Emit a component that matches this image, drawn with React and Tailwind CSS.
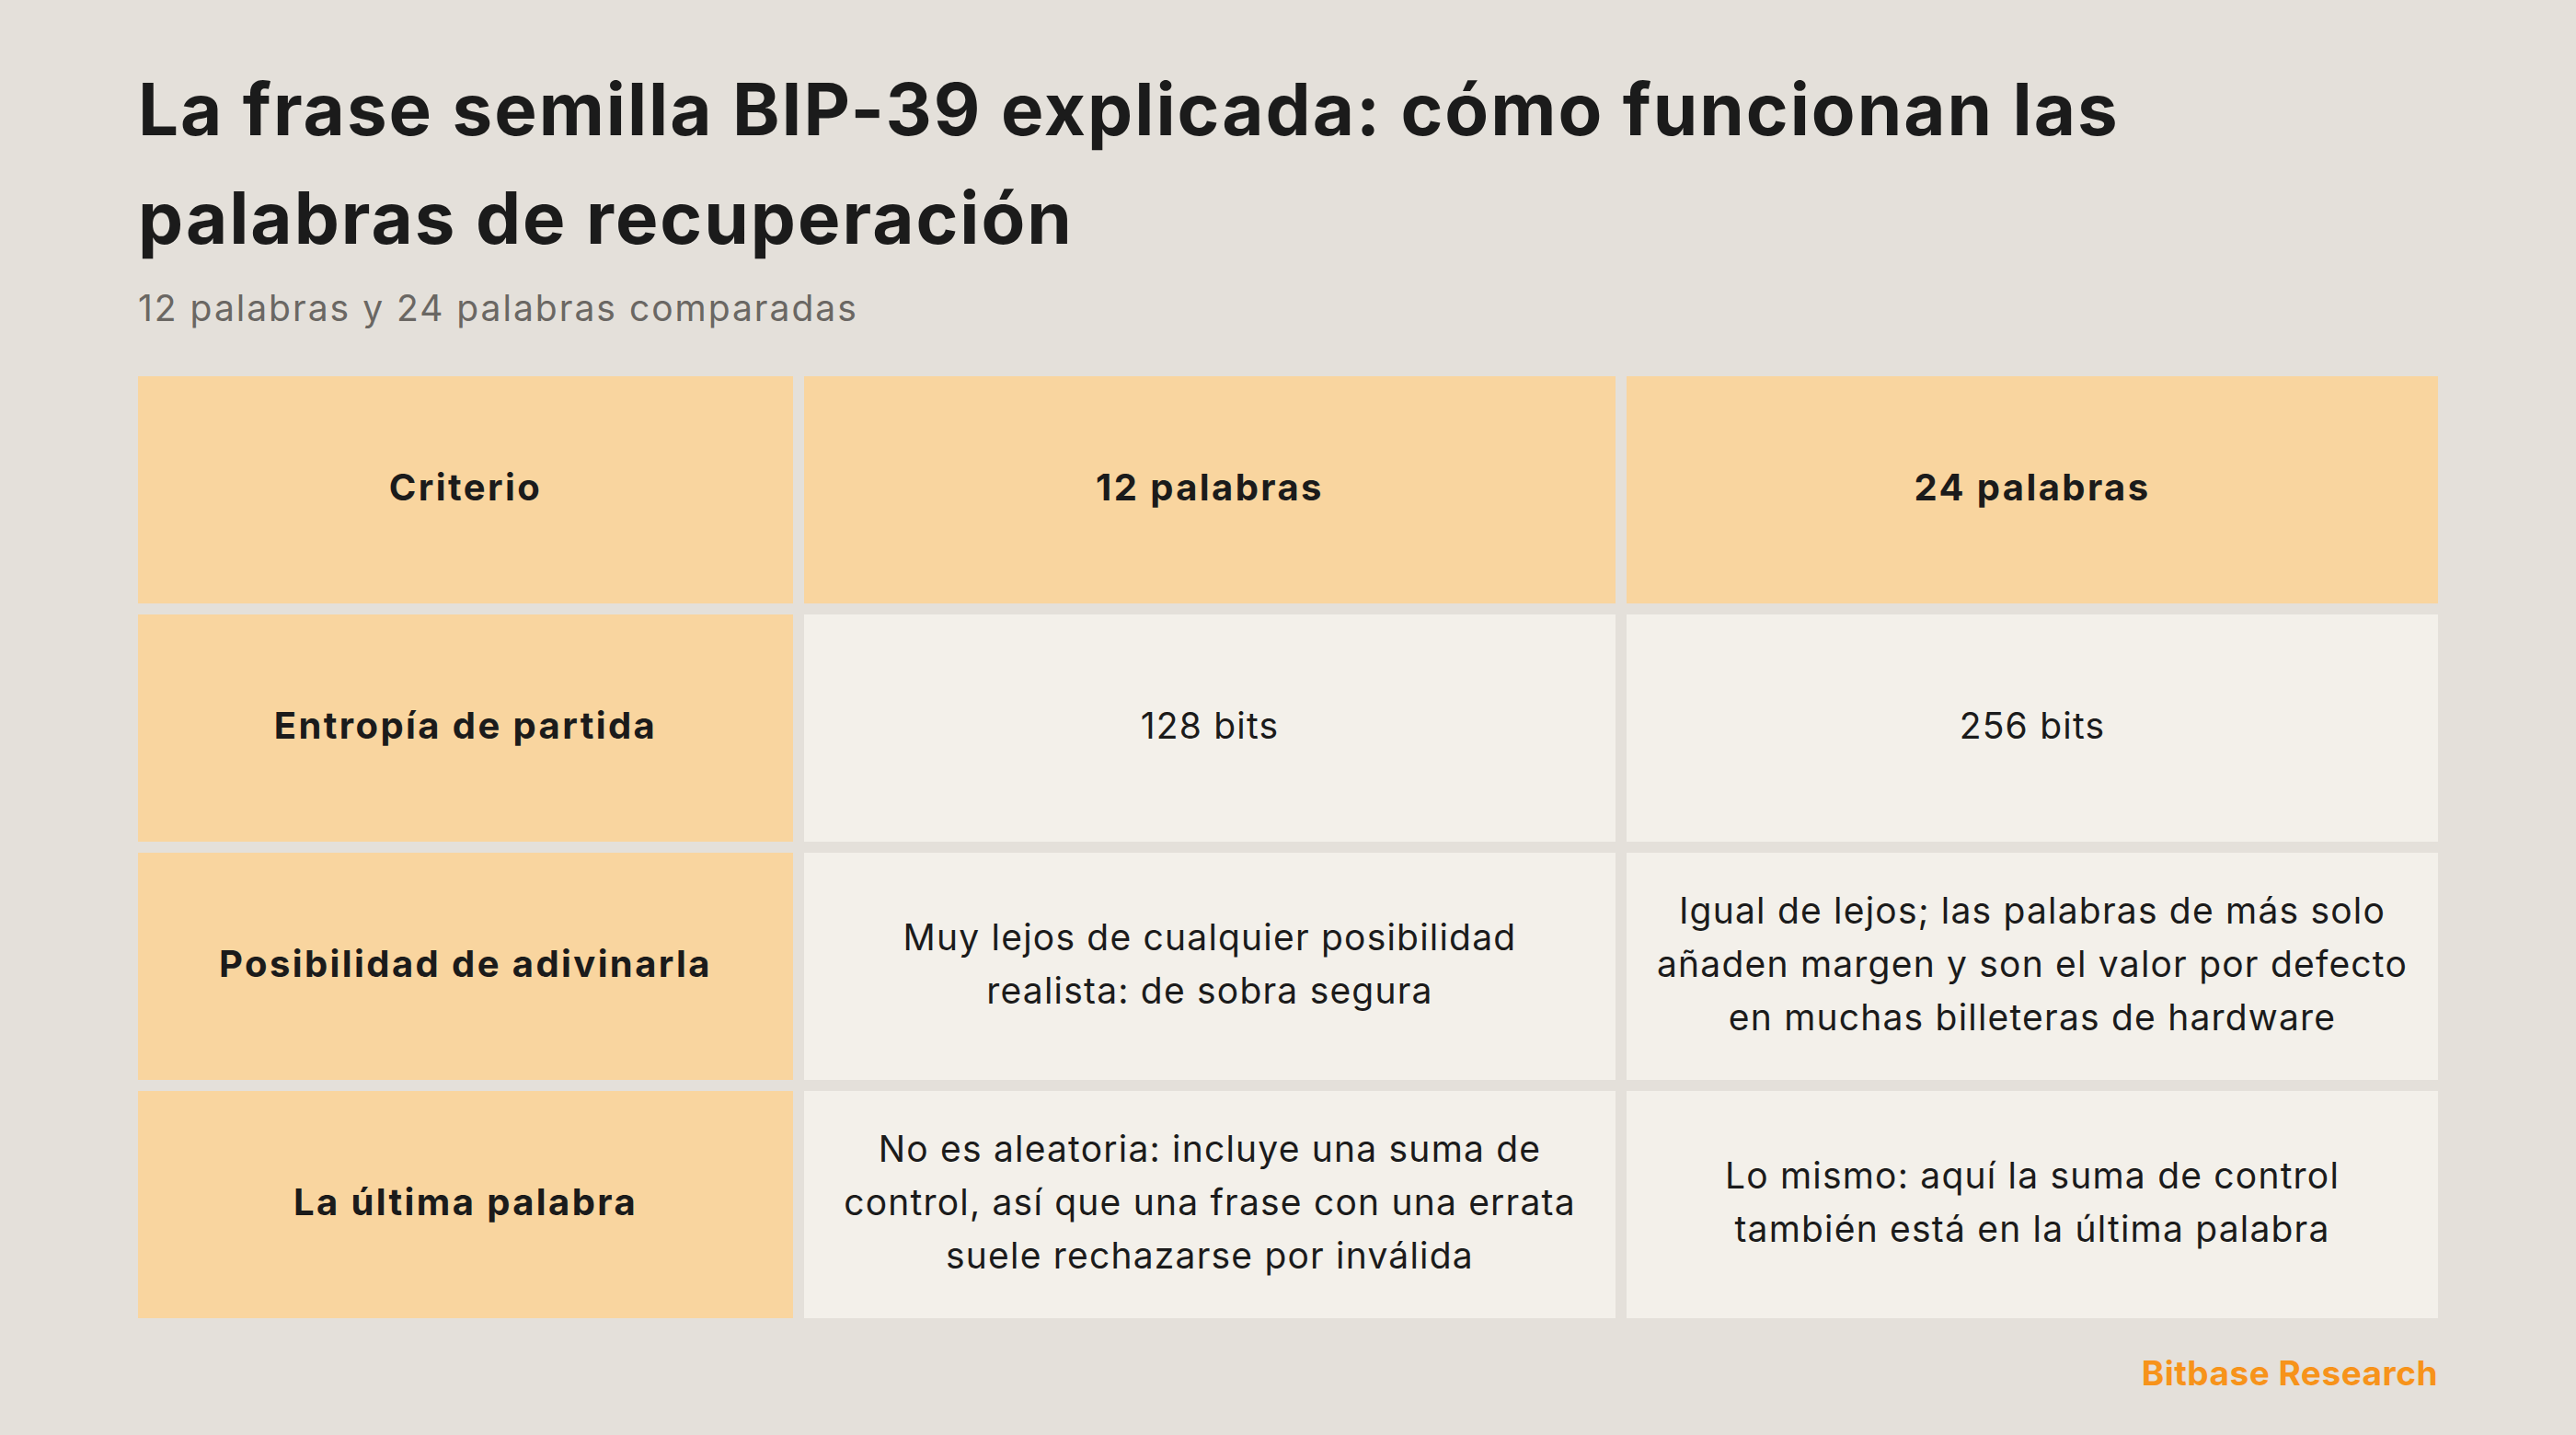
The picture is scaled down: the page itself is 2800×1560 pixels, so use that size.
const rows = [
  {
    label: "Entropía de partida",
    a: ["128 bits"],
    b: ["256 bits"],
  },
  {
    label: "Posibilidad de adivinarla",
    a: ["Muy lejos de cualquier posibilidad", "realista: de sobra segura"],
    b: [
      "Igual de lejos; las palabras de más solo",
      "añaden margen y son el valor por defecto",
      "en muchas billeteras de hardware",
    ],
  },
  {
    label: "La última palabra",
    a: [
      "No es aleatoria: incluye una suma de",
      "control, así que una frase con una errata",
      "suele rechazarse por inválida",
    ],
    b: ["Lo mismo: aquí la suma de control", "también está en la última palabra"],
  },
];

const font = { fontFamily: "Inter, 'Noto Sans', sans-serif" };

function HeadCell({ children }) {
  return (
    <div className="flex h-[247px] items-center justify-center bg-[#f9d59f] px-[36px] pb-[6px] text-center text-[40px] font-bold leading-[58px] tracking-[2.4px] text-[#1b1b1b]">
      {children}
    </div>
  );
}

// lines kept as in the original layout
function BodyCell({ lines }) {
  return (
    <div className="flex h-[247px] flex-col items-center justify-center bg-[#f3f0ea] px-[16px] pb-[6px] text-center text-[39px] leading-[58px] tracking-[1.2px] text-[#1b1b1b]">
      {lines.map((l) => (
        <span key={l} className="whitespace-nowrap">
          {l}
        </span>
      ))}
    </div>
  );
}

export default function App() {
  return (
    <div className="min-h-screen w-full bg-[#e4e0da] px-[150px] pt-[60px]" style={font}>
      <h1 className="text-[78px] font-bold leading-[118px] tracking-[2px] text-[#1b1b1b]">
        La frase semilla BIP-39 explicada: cómo funcionan las
        <br />
        palabras de recuperación
      </h1>
      <p className="mt-[10px] text-[39px] leading-[58px] tracking-[2px] text-[#6a6763]">
        12 palabras y 24 palabras comparadas
      </p>

      <div className="mt-[45px] grid grid-cols-[712px_882px_882px] gap-[12px]">
        <HeadCell>Criterio</HeadCell>
        <HeadCell>12 palabras</HeadCell>
        <HeadCell>24 palabras</HeadCell>
        {rows.map((r) => (
          <div key={r.label} className="contents">
            <HeadCell>{r.label}</HeadCell>
            <BodyCell lines={r.a} />
            <BodyCell lines={r.b} />
          </div>
        ))}
      </div>

      <div className="mt-[32px] text-right text-[37px] font-bold leading-[56px] tracking-[0.5px] text-[#f7931a]">
        Bitbase Research
      </div>
    </div>
  );
}
